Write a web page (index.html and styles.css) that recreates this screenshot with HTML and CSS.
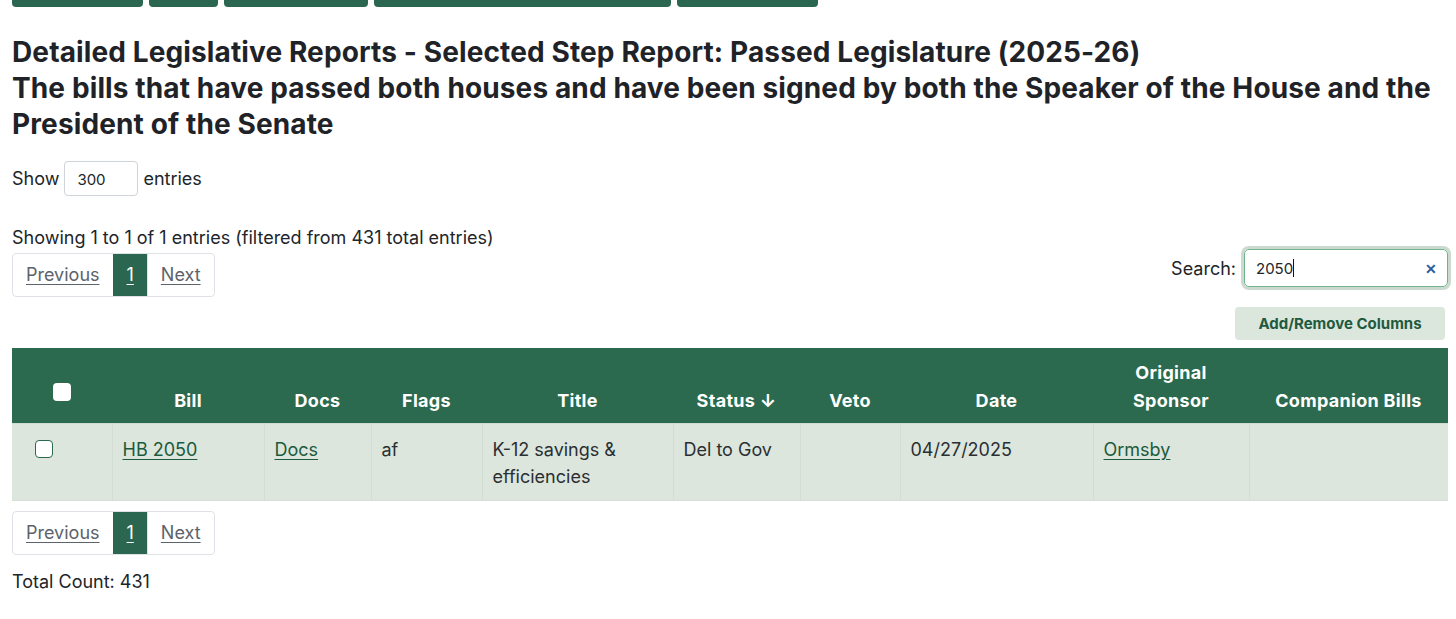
FILE: index.html
```html
<!DOCTYPE html>
<html lang="en">
<head>
<meta charset="utf-8">
<title>Passed Legislature</title>
<link rel="stylesheet" href="styles.css">
</head>
<body>
<div class="page">
  <nav class="topnav">
    <span class="navbtn w1"></span>
    <span class="navbtn w2"></span>
    <span class="navbtn w3"></span>
    <span class="navbtn w4"></span>
    <span class="navbtn w5"></span>
  </nav>

  <h1 class="title">Detailed Legislative Reports - Selected Step Report: Passed Legislature (2025-26)<br>The bills that have passed both houses and have been signed by both the Speaker of the House and the President of the Senate</h1>

  <div class="length">
    <span>Show</span>
    <span class="select">300</span>
    <span>entries</span>
  </div>

  <div class="info">Showing 1 to 1 of 1 entries (filtered from 431 total entries)</div>

  <div class="controls">
    <div class="pager">
      <a class="pg" href="#">Previous</a>
      <a class="pg active" href="#">1</a>
      <a class="pg" href="#">Next</a>
    </div>
    <div class="right">
      <label class="search">Search:
        <span class="searchbox"><span class="val">2050<span class="caret"></span></span><span class="clear">✕</span></span>
      </label>
      <button class="colbtn">Add/Remove Columns</button>
    </div>
  </div>

  <table class="grid">
    <colgroup>
      <col style="width:100px"><col style="width:152px"><col style="width:107px"><col style="width:111px"><col style="width:191px"><col style="width:127px"><col style="width:100px"><col style="width:193px"><col style="width:156px"><col style="width:199px">
    </colgroup>
    <thead>
      <tr>
        <th><span class="hcheck"></span></th>
        <th>Bill</th>
        <th>Docs</th>
        <th>Flags</th>
        <th>Title</th>
        <th>Status ↓</th>
        <th>Veto</th>
        <th>Date</th>
        <th>Original<br>Sponsor</th>
        <th>Companion Bills</th>
      </tr>
    </thead>
    <tbody>
      <tr>
        <td class="cb"><span class="rcheck"></span></td>
        <td><a href="#">HB 2050</a></td>
        <td><a href="#">Docs</a></td>
        <td>af</td>
        <td>K-12 savings &amp;<br>efficiencies</td>
        <td>Del to Gov</td>
        <td></td>
        <td>04/27/2025</td>
        <td><a href="#">Ormsby</a></td>
        <td></td>
      </tr>
    </tbody>
  </table>

  <div class="pager bottom">
    <a class="pg" href="#">Previous</a>
    <a class="pg active" href="#">1</a>
    <a class="pg" href="#">Next</a>
  </div>

  <div class="total">Total Count: 431</div>
</div>
</body>
</html>
```

FILE: styles.css
```css
html, body {
  margin: 0;
  padding: 0;
  background: #ffffff;
}

body {
  font-family: Inter, "Noto Sans", "Liberation Sans", sans-serif;
  font-size: 18px;
  line-height: 27px;
  color: #212529;
}

.page {
  padding: 0 8px 0 12px;
}

.topnav {
  display: flex;
  gap: 6px;
}

.navbtn {
  display: block;
  height: 7px;
  background: #2b6650;
  border-radius: 0 0 4px 4px;
}
.w1 { width: 131px; }
.w2 { width: 69px; }
.w3 { width: 144px; }
.w4 { width: 297px; }
.w5 { width: 141px; }

.title {
  margin: 27px 0 0 0;
  font-size: 28px;
  line-height: 36px;
  font-weight: 700;
  letter-spacing: 0.12px;
  color: #1f2328;
}

.length {
  margin-top: 19px;
  display: flex;
  align-items: center;
  gap: 5px;
  height: 35px;
}

.select {
  display: inline-flex;
  align-items: center;
  box-sizing: border-box;
  width: 74px;
  height: 35px;
  padding: 2px 12px 0 12px;
  border: 1px solid #ced4da;
  border-radius: 4px;
  font-size: 15px;
}

.info {
  margin-top: 28px;
}

.controls {
  display: flex;
  justify-content: space-between;
  align-items: flex-start;
}

.pager {
  display: flex;
  margin-top: 2px;
  border: 1px solid #dee2e6;
  border-radius: 4px;
  overflow: hidden;
}

.pg {
  display: block;
  padding: 7px 13px 8px 13px;
  color: #5c636a;
  text-decoration: underline;
  text-underline-offset: 3px;
}
.pg + .pg {
  border-left: 1px solid #dee2e6;
}
.pg.active {
  background: #2b6650;
  color: #ffffff;
  border-color: #2b6650;
}

.right {
  display: flex;
  flex-direction: column;
  align-items: flex-end;
}

.search {
  display: flex;
  align-items: center;
  gap: 8px;
  margin-top: -2px;
}

.searchbox {
  display: flex;
  align-items: center;
  justify-content: space-between;
  box-sizing: border-box;
  width: 204px;
  height: 38px;
  padding: 0 10px 0 11px;
  border: 1px solid #6fb48f;
  border-radius: 5px;
  box-shadow: 0 0 0 3px #ccd9cf;
  font-size: 15px;
}

.caret {
  display: inline-block;
  width: 1px;
  height: 18px;
  background: #111;
  vertical-align: -3px;
}

.clear {
  color: #2e5b9e;
  font-size: 14px;
  font-weight: 700;
}

.colbtn {
  margin-top: 20px;
  margin-right: 3px;
  width: 210px;
  height: 33px;
  border: none;
  border-radius: 4px;
  background: #dbe6dc;
  color: #1f5a3f;
  font-family: inherit;
  font-size: 15px;
  font-weight: 700;
}

.grid {
  margin-top: 8px;
  width: 1436px;
  table-layout: fixed;
  border-collapse: collapse;
}

.grid th {
  background: #2c6a4f;
  color: #ffffff;
  font-weight: 700;
  letter-spacing: 0.3px;
  text-align: center;
  vertical-align: bottom;
  padding: 11px 10px 8px 10px;
  line-height: 28px;
  border-bottom: 1px solid #cfdcd2;
}

.hcheck {
  display: inline-block;
  width: 18px;
  height: 18px;
  background: #ffffff;
  border-radius: 4px;
  vertical-align: -3px;
  position: relative;
  top: -9px;
}

.grid td {
  background: #dce6dc;
  color: #2b2f33;
  vertical-align: top;
  text-align: left;
  padding: 12px 10px 10px 10px;
  line-height: 27px;
  border-left: 1px solid #d2ddd3;
  border-bottom: 1px solid #d5ddd6;
}
.grid td:first-child {
  border-left: none;
}
.grid td.cb {
  padding-left: 23px;
}

.rcheck {
  display: inline-block;
  box-sizing: border-box;
  width: 18px;
  height: 18px;
  background: #ffffff;
  border: 1px solid #2c6a4f;
  border-radius: 4px;
  vertical-align: -2px;
}

.grid a {
  color: #1d5a3c;
  text-decoration: underline;
  text-underline-offset: 3px;
}

.pager.bottom {
  display: inline-flex;
  margin-top: 10px;
}

.total {
  margin-top: 13px;
}
```
